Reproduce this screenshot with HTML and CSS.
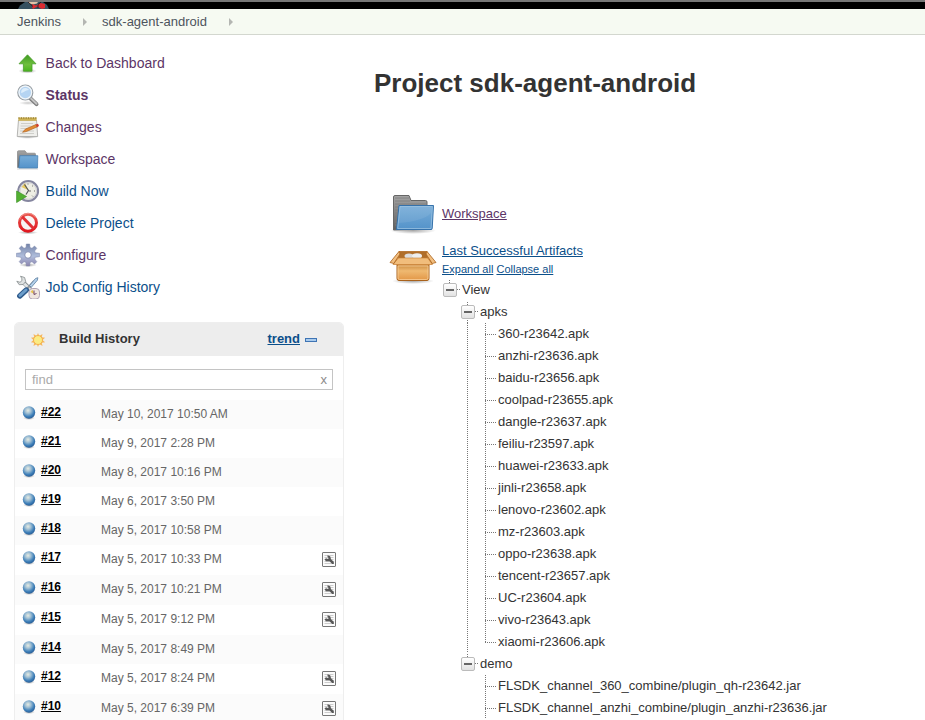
FILE: index.html
```
<!DOCTYPE html>
<html lang="en">
<head>
<meta charset="utf-8">
<title>sdk-agent-android [Jenkins]</title>
<link rel="stylesheet" href="styles.css">
</head>
<body>
<svg class="defs" width="0" height="0">
  <defs>
    <linearGradient id="gGreen" x1="0" y1="0" x2="0" y2="1"><stop offset="0" stop-color="#3f9a22"/><stop offset=".6" stop-color="#6fc03c"/><stop offset="1" stop-color="#48b41c"/></linearGradient>
    <linearGradient id="gBlue" x1="0" y1="0" x2="0" y2="1"><stop offset="0" stop-color="#78add8"/><stop offset="1" stop-color="#5493ca"/></linearGradient>
    <linearGradient id="gGray" x1="0" y1="0" x2="0" y2="1"><stop offset="0" stop-color="#a5a5a5"/><stop offset="1" stop-color="#5f5f5f"/></linearGradient>
    <linearGradient id="gBox" x1="0" y1="0" x2="0" y2="1"><stop offset="0" stop-color="#c07c30"/><stop offset=".45" stop-color="#efb971"/><stop offset="1" stop-color="#e29645"/></linearGradient>
    <linearGradient id="gRed" x1="0" y1="0" x2="0" y2="1"><stop offset="0" stop-color="#e8574f"/><stop offset="1" stop-color="#e01820"/></linearGradient>
    <linearGradient id="gGear" x1="0" y1="0" x2="0" y2="1"><stop offset="0" stop-color="#7383a8"/><stop offset=".55" stop-color="#afbddb"/><stop offset="1" stop-color="#8c84ae"/></linearGradient>
    <radialGradient id="gBall" cx=".42" cy=".34" r=".65"><stop offset="0" stop-color="#e6ebe2"/><stop offset=".35" stop-color="#a3c1d4"/><stop offset=".75" stop-color="#3f80b9"/><stop offset="1" stop-color="#2a619b"/></radialGradient>
    <radialGradient id="gShade"><stop offset="0" stop-color="#000" stop-opacity=".35"/><stop offset="1" stop-color="#000" stop-opacity="0"/></radialGradient>
    <symbol id="ball" viewBox="0 0 14 15"><ellipse cx="7" cy="13" rx="6" ry="2" fill="url(#gShade)"/><circle cx="7" cy="7.500" r="6.200" fill="url(#gBall)"/></symbol>
    <symbol id="wrench" viewBox="0 0 14 15"><rect x=".5" y=".5" width="13" height="14" rx=".5" fill="#fbfbfb" stroke="#777"/><path d="M2.500 3.500h9M2.500 5.500h9M2.500 7.500h9M2.500 9.500h9M2.500 11.500h9" stroke="#ccc"/><path d="M5.500 3.200 8.200 4.200 9 7.200 11.800 9.800v2.200h-1.600L7.500 9.200H4L2.600 7.400 4 6.300l2 .6.700-.9-1.200-1z" fill="#585858"/></symbol>
  </defs>
</svg>

<header class="topbar">
  <svg class="logo" width="34" height="7" viewBox="0 0 34 7"><path d="M1 7 3 3.500 8 0h18l4 3 2 4z" fill="#35505f"/><path d="M11 0h10l-1 1.500-4 1-4-1z" fill="#dfc3a8"/><path d="m15 2 4 1.500L24 1l4 1v4l-3 1-5-2.500-4 2.500-1-2z" fill="#dc2a30"/><path d="m11 0 5 4.500M24 0l-3 2.500M21 3v3" stroke="#2a2022"/></svg>
</header>
<nav class="crumbs">
  <span class="crumb">Jenkins</span><i class="arrow first"></i><span class="crumb project">sdk-agent-android</span><i class="arrow"></i>
</nav>

<div class="page">
  <aside class="side">
    <ul class="tasks">
      <li><svg width="24" height="24" viewBox="0 0 24 24"><ellipse cx="11.500" cy="20" rx="9" ry="2.600" fill="url(#gShade)"/><path d="m11.500 3.800 8.500 9h-4v7.400H7.400v-7.400H3z" fill="url(#gGreen)" stroke="#4a9e2c" stroke-width=".8"/></svg><a class="seen">Back to Dashboard</a></li>
      <li><svg width="24" height="24" viewBox="0 0 24 24"><ellipse cx="12" cy="20" rx="9" ry="2" fill="url(#gShade)" opacity=".6"/><path d="m14.500 15.500 6 5.600" stroke="#7c7c7c" stroke-width="4" stroke-linecap="round"/><path d="m15 15.500 5.500 5.200" stroke="#c4c4c4" stroke-width="2" stroke-linecap="round"/><circle cx="9.300" cy="9.500" r="7.500" fill="#b5d4f2" stroke="#9a9fa3" stroke-width="1.200"/><circle cx="9.300" cy="9.500" r="6.300" fill="none" stroke="#f1f5f8" stroke-width="1.200"/><path d="M5 10c0-5 5-6.500 8-3-4 0-5 3-8 3z" fill="#dcedfb"/></svg><a class="seen current">Status</a></li>
      <li><svg width="24" height="24" viewBox="0 0 24 24"><ellipse cx="11.500" cy="22" rx="11" ry="1.800" fill="url(#gShade)"/><path d="M2.500 5h18l1.200 16.500H1.200z" fill="#efefec" stroke="#a5a5a2" stroke-width=".8"/><path d="M2.400 2.500h18.200v3.300H2.400z" fill="#cdb254"/><path d="M2.500 3h18" stroke="#937a2e" stroke-width="1.600" stroke-dasharray="1 1.400"/><path d="M5 8.500h12M4.500 11h10M4.500 13.500h7M4 16h14M4 18.500h14" stroke="#c6c6c2" stroke-width=".8"/><path d="M6.500 17.300 9.500 14 20 9.500l1.500 2.300L10.500 16.500z" fill="#e38b32" stroke="#a65b1c" stroke-width=".6"/><path d="M19.800 9.500 22 8.700l1 2.200-2 1.300z" fill="#cf3d31"/></svg><a class="seen">Changes</a></li>
      <li><svg width="24" height="24" viewBox="0 0 24 24"><path d="M1.500 20.500V4.800q0-1 1-1H9l1.800 2.400h7.700q1 0 1 1V19.500z" fill="url(#gGray)" stroke="#858585" stroke-width=".7"/><path d="M3.800 8.700h18L21.500 21H2.800z" fill="url(#gBlue)" stroke="#4680b4" stroke-width=".8"/><path d="M1 22h21" stroke="#000" stroke-opacity=".16"/></svg><a class="seen">Workspace</a></li>
      <li><svg width="24" height="24" viewBox="0 0 24 24"><circle cx="12.200" cy="12" r="9.900" fill="#eeeee4" stroke="#85869f" stroke-width="2"/><circle cx="12.200" cy="12" r="8.300" fill="none" stroke="#cfcfd6"/><path d="M12 11 5.500 8 9 4z" fill="#e8ca60"/><path d="m8.500 5.500 4 6-2.500 4" stroke="#55575b" stroke-width="1.200" fill="none"/><path d="M13 12h2M12 4.500v1M19 12h-1M17 6.500l-.8.8M17 17.500l-.8-.8" stroke="#666"/><path d="M.6 12 10.500 17.500.6 23.500z" fill="#53b032" stroke="#3d9426" stroke-width=".7"/></svg><a>Build Now</a></li>
      <li><svg width="24" height="24" viewBox="0 0 24 24"><ellipse cx="12" cy="21.500" rx="10" ry="1.800" fill="url(#gShade)"/><circle cx="12" cy="11.700" r="8.500" fill="#f7f5f5" stroke="url(#gRed)" stroke-width="3"/><path d="m6.200 5.800 11.600 12" stroke="#e23035" stroke-width="3"/><path d="M3.700 8.500a9 9 0 0 1 16-2" fill="none" stroke="#f49a94" stroke-width=".8"/></svg><a>Delete Project</a></li>
      <li><svg width="24" height="24" viewBox="0 0 24 24"><ellipse cx="12" cy="22" rx="9" ry="2" fill="url(#gShade)"/><path d="m10 4.500.3-3.500h3.400l.3 3.500 2 .8 2.500-2.300 2.300 2.300-2.200 2.700.7 1.800 4.300.5v3.400l-4.300.5-.7 1.800 2.200 2.700-2.300 2.300-2.500-2.300-2 .8-.3 3.500h-3.400l-.3-3.500-2-.8L5.500 21l-2.300-2.300L5.400 16l-.7-1.800-4.300-.5v-3.400l4.300-.5.7-1.800-2.200-2.700L5.500 3 8 5.300z" fill="url(#gGear)" stroke="#7e89aa" stroke-width=".5"/><circle cx="12" cy="12" r="3.300" fill="#fff" stroke="#8790b3"/></svg><a class="seen">Configure</a></li>
      <li><svg width="24" height="24" viewBox="0 0 24 24"><path d="M6.500 6.500 19 19" stroke="#858b8d" stroke-width="4"/><path d="M6 6.500 19 19" stroke="#e2e5e5" stroke-width="2.600"/><path d="M4.500 1.200 8.600 2.500l1.100 4-2.500 3-4 .2L.8 6.200 4 7.300l2-1.800L5.700 3.300z" fill="#dfe2e2" stroke="#858b8d" stroke-width=".8"/><path d="m10 15 8-9" stroke="#93999d" stroke-width="2"/><path d="m13.500 10.500 6-7 2.400-.8-.6 2.600-6 7z" fill="#b3d0ea" stroke="#5a7da0" stroke-width=".8"/><path d="m3.800 21 6.500-6" stroke="#2f5b8c" stroke-width="5.400" stroke-linecap="round"/><path d="m4 20.500 6-5.500" stroke="#6b9dca" stroke-width="3" stroke-linecap="round"/><rect x="13" y="13.500" width="10.500" height="10.500" rx="3.500" fill="#f0e6df" stroke="#b0a4b6"/><path d="M18.300 19 14.500 17l2-2.200z" fill="#e7c34c"/><path d="M18 15.500V19.500l2.500-1" stroke="#714468" fill="none"/></svg><a>Job Config History</a></li>
    </ul>

    <section class="history">
      <header class="history-head">
        <svg class="sun" width="16" height="16" viewBox="0 0 16 16"><path d="m8 .9 1.300 3 3.200-1.800-.7 3.200 3.300.4L12.500 8l2.600 2.300-3.300.4.700 3.200-3.200-1.800-1.300 3-1.300-3-3.200 1.800.7-3.200-3.300-.4L3.500 8 .9 5.700l3.300-.4-.7-3.200 3.200 1.800z" fill="#f7b75c"/><circle cx="8" cy="8" r="4.500" fill="#fbec83" stroke="#f3b050"/></svg>
        <span class="history-title">Build History</span>
        <a class="trend">trend</a><i class="dash"></i>
      </header>
      <div class="find"><span>find</span><span class="clear">x</span></div>
      <div class="builds">
        <div class="build"><svg class="ball"><use href="#ball"/></svg><a>#22</a><time>May 10, 2017 10:50 AM</time></div>
        <div class="build"><svg class="ball"><use href="#ball"/></svg><a>#21</a><time>May 9, 2017 2:28 PM</time></div>
        <div class="build"><svg class="ball"><use href="#ball"/></svg><a>#20</a><time>May 8, 2017 10:16 PM</time></div>
        <div class="build"><svg class="ball"><use href="#ball"/></svg><a>#19</a><time>May 6, 2017 3:50 PM</time></div>
        <div class="build"><svg class="ball"><use href="#ball"/></svg><a>#18</a><time>May 5, 2017 10:58 PM</time></div>
        <div class="build changed"><svg class="ball"><use href="#ball"/></svg><a>#17</a><time>May 5, 2017 10:33 PM</time><svg class="wrench"><use href="#wrench"/></svg></div>
        <div class="build changed"><svg class="ball"><use href="#ball"/></svg><a>#16</a><time>May 5, 2017 10:21 PM</time><svg class="wrench"><use href="#wrench"/></svg></div>
        <div class="build changed"><svg class="ball"><use href="#ball"/></svg><a>#15</a><time>May 5, 2017 9:12 PM</time><svg class="wrench"><use href="#wrench"/></svg></div>
        <div class="build"><svg class="ball"><use href="#ball"/></svg><a>#14</a><time>May 5, 2017 8:49 PM</time></div>
        <div class="build changed"><svg class="ball"><use href="#ball"/></svg><a>#12</a><time>May 5, 2017 8:24 PM</time><svg class="wrench"><use href="#wrench"/></svg></div>
        <div class="build changed"><svg class="ball"><use href="#ball"/></svg><a>#10</a><time>May 5, 2017 6:39 PM</time><svg class="wrench"><use href="#wrench"/></svg></div>
      </div>
    </section>
  </aside>

  <main class="main">
    <h1>Project sdk-agent-android</h1>
    <div class="entry workspace">
      <svg width="48" height="48" viewBox="0 0 48 48"><ellipse cx="24" cy="40.500" rx="23" ry="3.500" fill="url(#gShade)"/><path d="M4.500 40V7q0-1.500 1.500-1.500h14l2 5h14.500q1.500 0 1.500 1.500V39z" fill="url(#gGray)" stroke="#666"/><path d="M6 8h14M6 11h15M6 14h31M6 17h4M6 20h3M6 23h3M6 26h3M6 29h2M6 32h2M6 35h2" stroke="#7c7c7c" stroke-width=".8"/><path d="M10 15.500h34.500L43.200 38.500q0 1-1.200 1H7.500z" fill="url(#gBlue)" stroke="#3672ab"/><path d="M11 16.500h32.300L42 38.500H8.700z" fill="none" stroke="#98c0e0" stroke-width=".8"/><path d="M9.500 33q25-2 32.500-10l.5-6.500H11z" fill="#fff" opacity=".08"/></svg>
      <a class="seen">Workspace</a>
    </div>
    <div class="entry artifacts">
      <svg width="48" height="48" viewBox="0 0 48 48"><ellipse cx="24" cy="41" rx="21" ry="3" fill="url(#gShade)"/><path d="M8 23h32v15.500q0 2-2 2H10q-2 0-2-2z" fill="url(#gBox)" stroke="#a9621c"/><path d="M10 11.500h28l5 12.500H4.500z" fill="#e5a55b" stroke="#a9621c" stroke-width=".8"/><path d="M11 12h26l2 6.500H9z" fill="#b06e2a"/><ellipse cx="20" cy="16" rx="4.500" ry="2.600" fill="#ddd"/><ellipse cx="28" cy="16" rx="5" ry="2.800" fill="#eee"/><path d="m9.500 18-5.500 6.500h39.500L38.500 18z" fill="#f1bd7c" stroke="#c78034" stroke-width=".6"/><path d="M10 11.500 1 22.500l3.800 1L11 14z" fill="#f2bf80" stroke="#a9621c" stroke-width=".8"/><path d="M38 11.500 47 22.500l-3.800 1L37 14z" fill="#f2bf80" stroke="#a9621c" stroke-width=".8"/><path d="M9 26h30v12q0 1.500-1.500 1.500h-27Q9 39.500 9 38z" fill="none" stroke="#fbd6a4" stroke-width=".7"/></svg>
      <div class="artifact-body">
        <a class="artifact-link">Last Successful Artifacts</a>
        <div class="tools"><a>Expand all</a> <a>Collapse all</a></div>
        <div class="tree">
          <div class="row"><i class="cell toggle"></i><span>View</span></div>
          <div class="row"><i class="cell"></i><i class="cell toggle more"></i><span>apks</span></div>
          <div class="row"><i class="cell"></i><i class="cell line"></i><i class="cell branch"></i><span>360-r23642.apk</span></div>
          <div class="row"><i class="cell"></i><i class="cell line"></i><i class="cell branch"></i><span>anzhi-r23636.apk</span></div>
          <div class="row"><i class="cell"></i><i class="cell line"></i><i class="cell branch"></i><span>baidu-r23656.apk</span></div>
          <div class="row"><i class="cell"></i><i class="cell line"></i><i class="cell branch"></i><span>coolpad-r23655.apk</span></div>
          <div class="row"><i class="cell"></i><i class="cell line"></i><i class="cell branch"></i><span>dangle-r23637.apk</span></div>
          <div class="row"><i class="cell"></i><i class="cell line"></i><i class="cell branch"></i><span>feiliu-r23597.apk</span></div>
          <div class="row"><i class="cell"></i><i class="cell line"></i><i class="cell branch"></i><span>huawei-r23633.apk</span></div>
          <div class="row"><i class="cell"></i><i class="cell line"></i><i class="cell branch"></i><span>jinli-r23658.apk</span></div>
          <div class="row"><i class="cell"></i><i class="cell line"></i><i class="cell branch"></i><span>lenovo-r23602.apk</span></div>
          <div class="row"><i class="cell"></i><i class="cell line"></i><i class="cell branch"></i><span>mz-r23603.apk</span></div>
          <div class="row"><i class="cell"></i><i class="cell line"></i><i class="cell branch"></i><span>oppo-r23638.apk</span></div>
          <div class="row"><i class="cell"></i><i class="cell line"></i><i class="cell branch"></i><span>tencent-r23657.apk</span></div>
          <div class="row"><i class="cell"></i><i class="cell line"></i><i class="cell branch"></i><span>UC-r23604.apk</span></div>
          <div class="row"><i class="cell"></i><i class="cell line"></i><i class="cell branch"></i><span>vivo-r23643.apk</span></div>
          <div class="row"><i class="cell"></i><i class="cell line"></i><i class="cell branch last"></i><span>xiaomi-r23606.apk</span></div>
          <div class="row"><i class="cell"></i><i class="cell toggle"></i><span>demo</span></div>
          <div class="row"><i class="cell"></i><i class="cell"></i><i class="cell branch"></i><span>FLSDK_channel_360_combine/plugin_qh-r23642.jar</span></div>
          <div class="row"><i class="cell"></i><i class="cell"></i><i class="cell branch"></i><span>FLSDK_channel_anzhi_combine/plugin_anzhi-r23636.jar</span></div>
        </div>
      </div>
    </div>
  </main>
</div>
</body>
</html>
```
FILE: styles.css
```
*, *::before { box-sizing: border-box; }
body {
  margin: 0;
  height: 720px;
  overflow: hidden;
  background: #fff;
  color: #333;
  font: 13px/22px "Liberation Sans", Arial, sans-serif;
}
svg { display: block; flex: none; }
.defs { position: absolute; }
a { color: #0b4f8a; }
a.seen { color: #5c3566; }

.topbar { height: 9px; background: #000; border-top: 2px solid #777; }
.logo { margin-left: 17px; }
.crumbs {
  display: flex;
  align-items: center;
  height: 26px;
  padding: 1px 0 0 17px;
  background: #f6faf2;
  border-bottom: 1px solid #d3d7cf;
  color: #4d545d;
}
.arrow {
  margin-left: 22px;
  border: solid transparent;
  border-width: 4px 0 4px 4px;
  border-left-color: #b4b6b2;
}
.arrow.first { margin: 0 15px 0 22px; }

.page { display: flex; height: 685px; overflow: hidden; }
.side { width: 344px; padding: 12px 0 0 14px; flex: none; }
.tasks { list-style: none; margin: 0; padding: 0 0 0 2px; }
.tasks li { display: flex; align-items: center; gap: 5.600px; height: 32px; font-size: 14px; }
.tasks .current { font-weight: bold; }

.history { margin-top: 19px; width: 330px; border: 1px solid #eee; border-radius: 5px 5px 0 0; }
.history-head {
  display: flex;
  align-items: center;
  height: 33px;
  padding: 0 26px 2px 15px;
  background: #ededed;
  border-radius: 4px 4px 0 0;
  font-weight: bold;
}
.sun { margin: 3px 13px 0 0; }
.trend { margin-left: auto; text-decoration: underline; }
.dash { width: 12px; height: 4px; margin: 3px 0 0 5px; background: #a9cbed; border: 1px solid #3f74b4; }
.find {
  display: flex;
  justify-content: space-between;
  align-items: center;
  height: 21px;
  margin: 13px 10px 10px;
  padding: 0 5px 0 6px;
  border: 1px solid #c4c4c4;
  color: #aaa;
}
.find .clear { color: #8b8b8b; }
.build {
  display: flex;
  align-items: flex-start;
  height: 29px;
  padding: 5px 8px 0 7px;
  font-size: 12px;
  line-height: 15px;
}
.build.changed { height: 30px; }
.build:nth-child(odd) { background: #fbfbfb; }
.ball { width: 14px; height: 15px; }
.build a { width: 60px; margin: 0 0 0 5px; color: #000; font-weight: bold; text-decoration: underline; }
.build time { margin-top: 2px; color: #666; }
.wrench { width: 14px; height: 15px; margin: 2px -1px 0 auto; }

.main { padding: 30px 0 0 46px; margin-left: -16px; }
.main a { text-decoration: underline; }
h1 { margin: 0; font-size: 26px; line-height: 36px; height: 90px; }
.entry { display: flex; padding-left: 15px; gap: 5px; }
.workspace { height: 50px; margin-top: 35px; }
.workspace a { margin-top: 13px; }
.artifact-link { display: block; line-height: 20px; padding-top: 1px; }
.tools { font-size: 11px; line-height: 16px; height: 18px; }
.tree { margin-left: 1px; white-space: nowrap; }
.row { display: flex; height: 22px; }
.row span { padding-left: 1px; }
.cell { width: 18px; height: 22px; flex: none; background-repeat: no-repeat; }
.line, .branch { background-image: repeating-linear-gradient(#777 0 1px, transparent 1px 2px); background-size: 1px 22px; background-position: 6px 0; }
.branch {
  background-image: repeating-linear-gradient(#777 0 1px, transparent 1px 2px), repeating-linear-gradient(90deg, #777 0 1px, transparent 1px 2px);
  background-size: 1px 22px, 12px 1px;
  background-position: 6px 0, 6px 11px;
}
.branch.last { background-size: 1px 12px, 12px 1px; }
.toggle {
  display: flex;
  padding-top: 4px;
  background-image: repeating-linear-gradient(#777 0 1px, transparent 1px 2px), repeating-linear-gradient(90deg, #777 0 1px, transparent 1px 2px);
  background-size: 1px 4px, 4px 1px;
  background-position: 6px 1px, 14px 10px;
}
.toggle.more { background-size: 1px 22px, 4px 1px; }
.toggle::before {
  content: "";
  width: 14px;
  height: 14px;
  border: 1px solid #bbb;
  border-radius: 2px;
  background: linear-gradient(#666, #666) 2px 5px / 8px 2px no-repeat, linear-gradient(#fff, #e2e2e2);
}
```
